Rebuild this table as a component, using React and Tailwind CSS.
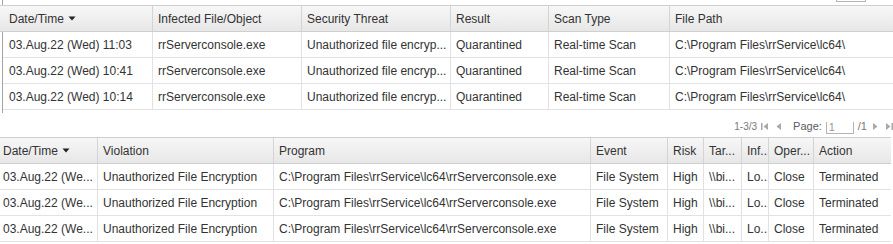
import React from "react";

const font = { fontFamily: '"Liberation Sans", Arial, sans-serif' };

function SortArrow() {
  return (
    <svg width="8" height="5" viewBox="0 0 8 5" className="ml-[4px] inline-block">
      <path d="M0.5 0.5 L7.5 0.5 L4 4.5 Z" fill="#222" />
    </svg>
  );
}

function Grid({ widths, headerWidths, headers, rows, firstPad, headerShift }) {
  return (
    <div className="flex flex-col">
      <div
        className={`flex h-[27px] border-y border-[#cfcfcf] bg-gradient-to-b from-[#f7f7f7] to-[#e7e7e7] ${headerShift}`}
      >
        {headers.map((h, i) => (
          <div
            key={i}
            style={{ width: headerWidths[i] }}
            className={`flex shrink-0 items-center whitespace-nowrap overflow-hidden ${
              i === 0 ? firstPad.header : "pl-[5px] border-l border-[#d4d4d4]"
            }`}
          >
            {h}
            {i === 0 && <SortArrow />}
          </div>
        ))}
      </div>
      {rows.map((r, ri) => (
        <div key={ri} className="flex h-[26px] border-b border-[#e2e2e2]">
          {r.map((c, i) => (
            <div
              key={i}
              style={{ width: widths[i] }}
              className={`flex shrink-0 items-center whitespace-nowrap overflow-hidden ${
                i === 0 ? firstPad.body : "pl-[5px] border-l border-[#e2e2e2]"
              }`}
            >
              {c}
            </div>
          ))}
        </div>
      ))}
    </div>
  );
}

function PageIcon({ type }) {
  const c = "#a8a8a8";
  return (
    <svg width="8" height="7" viewBox="0 0 8 7" className="shrink-0">
      {type === "first" && (
        <>
          <rect x="0" y="0" width="1.5" height="7" fill={c} />
          <path d="M7 0 L7 7 L2.5 3.5 Z" fill={c} />
        </>
      )}
      {type === "prev" && <path d="M6 0 L6 7 L1.5 3.5 Z" fill={c} />}
      {type === "next" && <path d="M2 0 L2 7 L6.5 3.5 Z" fill={c} />}
      {type === "last" && (
        <>
          <path d="M1 0 L1 7 L5.5 3.5 Z" fill={c} />
          <rect x="6.5" y="0" width="1.5" height="7" fill={c} />
        </>
      )}
    </svg>
  );
}

export default function App() {
  const topWidths = [149, 149, 149, 98, 121, 224];
  const topHeaderWidths = [152, 149, 149, 98, 121, 224];
  const topHeaders = ["Date/Time", "Infected File/Object", "Security Threat", "Result", "Scan Type", "File Path"];
  const times = ["03.Aug.22 (Wed) 11:03", "03.Aug.22 (Wed) 10:41", "03.Aug.22 (Wed) 10:14"];
  const topRows = times.map((t) => [
    t,
    "rrServerconsole.exe",
    "Unauthorized file encryp...",
    "Quarantined",
    "Real-time Scan",
    "C:\\Program Files\\rrService\\lc64\\",
  ]);

  const botWidths = [97, 176, 317, 77, 36, 38, 27, 45, 78];
  const botHeaders = ["Date/Time", "Violation", "Program", "Event", "Risk", "Tar...", "Inf...", "Oper...", "Action"];
  const botRows = [0, 1, 2].map(() => [
    "03.Aug.22 (We...",
    "Unauthorized File Encryption",
    "C:\\Program Files\\rrService\\lc64\\rrServerconsole.exe",
    "File System",
    "High",
    "\\\\bi...",
    "Lo...",
    "Close",
    "Terminated",
  ]);

  return (
    <div className="w-[893px] h-[244px] overflow-hidden bg-white text-[12px] text-[#333]" style={font}>
      {/* top table block */}
      <div className="ml-[2px] border-l border-[#a4a4a4] w-[891px]">
        <div className="h-[5px] overflow-hidden flex justify-end pr-[27px]">
          <div className="w-[30px] h-[12px] -mt-[10px] border border-[#b4b4b4] bg-white" />
        </div>
        <Grid
          widths={topWidths}
          headerWidths={topHeaderWidths}
          headers={topHeaders}
          rows={topRows}
          firstPad={{ header: "pl-[9px]", body: "pl-[6px]" }}
          headerShift="-ml-[3px]"
        />
        <div className="h-[3px]" />
      </div>

      {/* pagination */}
      <div className="h-[24px] flex flex-col">
        <div className="h-[9px]" />
        <div className="h-[15px] overflow-hidden flex justify-end items-start text-[11px] text-[#5a5a5a]">
          <div className="flex items-center -mt-[3px] h-[15px]">
            <span className="text-[#777] text-[10px] mr-[4px]">1-3/3</span>
            <PageIcon type="first" />
            <span className="w-[6px]" />
            <PageIcon type="prev" />
            <span className="ml-[10px]">Page:</span>
            <div className="ml-[4px] w-[28px] h-[14px] border border-[#b4b4b4] bg-white text-[11px] leading-[12px] pl-[2px] text-[#999]">1</div>
            <span className="ml-[4px] text-[#777]">/1</span>
            <span className="w-[4px]" />
            <PageIcon type="next" />
            <span className="w-[6px]" />
            <PageIcon type="last" />
          </div>
        </div>
      </div>

      {/* bottom table */}
      <div className="w-[891px]">
        <Grid
          widths={botWidths}
          headerWidths={botWidths}
          headers={botHeaders}
          rows={botRows}
          firstPad={{ header: "pl-[3px]", body: "pl-[3px]" }}
          headerShift=""
        />
      </div>
    </div>
  );
}
